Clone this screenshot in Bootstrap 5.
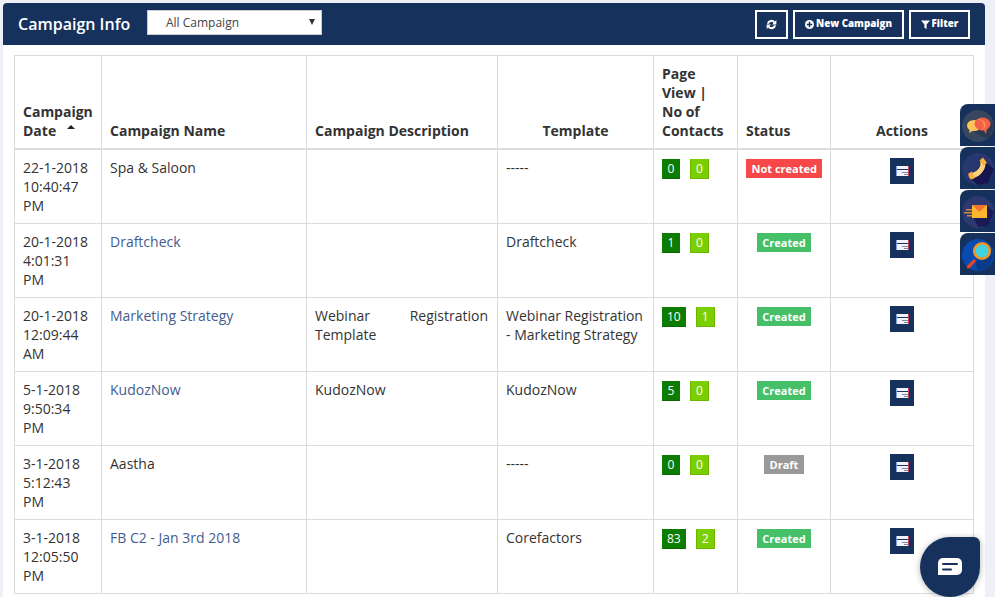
<!DOCTYPE html>
<html lang="en">
<head>
<meta charset="utf-8">
<title>Campaign Info</title>
<link href="https://cdn.jsdelivr.net/npm/bootstrap@5.3.0/dist/css/bootstrap.min.css" rel="stylesheet">
<style>
html,body{height:597px;overflow:hidden}
body{background:#edf0f6;font-family:"Open Sans",sans-serif;font-size:14px;color:#333;line-height:19px}
.shell{margin:3px 10px 0 3px;background:#fff;height:594px;overflow:hidden;border-radius:4px 4px 0 0}
.headbar{background:#16315c;height:42px;padding:0 15px;color:#fff}
.headbar h1{font-size:16px;font-weight:600;margin:0;line-height:46px;width:129px}
.pick{width:175px;height:25px;background:#fff;border:1px solid #ccc;color:#444;font-size:12px;line-height:23px;padding:0 18px;position:relative;margin-top:-4px}
.pick::after{content:"";position:absolute;right:6px;top:8px;border:3px solid transparent;border-top:6px solid #333;border-bottom:0}
.hbtn{height:29px;border:2px solid #fff;border-radius:0;background:transparent;color:#fff;font-size:9.8px;font-weight:800;padding:0;display:flex;align-items:center;justify-content:center;gap:2px}
.hbtn:hover{color:#fff}
.hb1{width:33px}.hb2{width:111px}.hb3{width:61px}
.tablewrap{padding:10px 11px 0 11px}
.tablewrap .table{table-layout:fixed;width:960px;margin:0;border-color:#dcdcdc;color:#333;font-size:14px;line-height:19px;--bs-table-color:#333}
.tablewrap .table>:not(caption)>*>*{padding:8px;border-width:1px;border-color:#dcdcdc;color:#333}
.tablewrap .table thead th{vertical-align:bottom;font-weight:700;border-bottom:2px solid #dcdcdc}
.tablewrap tbody td{height:74px;vertical-align:top}
.tablewrap .table thead tr,.tablewrap tbody tr{border-color:#dcdcdc}
.tablewrap .table a.cname{color:#435d91;text-decoration:none}
.sortup{display:inline-block;border:4px solid transparent;border-bottom:4px solid #222;border-top:0;margin:0 0 7px 7px}
.tablewrap .table>tbody>tr>td.just{text-align:justify;padding-right:9px}
.cnt{display:inline-block;min-width:18px;height:20px;line-height:20px;font-size:12px;text-align:center;color:#fff;padding:0 5px;margin:1px 7px 0 0;vertical-align:top}
.cntd{background:#0c7c02;border-bottom:1px solid #0a6a02}
.cntl{background:#7bcf00;border:1px solid #6cb500;border-top-color:#7bcf00;min-width:19px;margin-left:3px;line-height:18px}
.pill{display:inline-block;color:#fff;font-size:11px;font-weight:700;line-height:19px;height:19px;padding:0 5.500px;margin-top:1px;vertical-align:top;white-space:nowrap}
.pred{background:#f64848}.pgrn{background:#45bf68}.pgry{background:#999}
.act{width:24px;height:26px;margin:0 auto;background:#16315c;display:flex;align-items:center;justify-content:center}
.sidebox{position:absolute;right:0;top:104px;width:35px;display:flex;flex-direction:column;gap:1px}
.sidebox div{height:42px;background:#16315c;border-top-left-radius:8px;display:flex;align-items:center;padding:2px 0 0 2px;overflow:hidden}
.sidebox svg{flex:none}
.chatfab{position:absolute;left:920px;top:537px;width:60px;height:60px;background:#16315c;border-radius:50% 6px 50% 50%;box-shadow:0 1px 6px rgba(0,0,0,.3);display:flex;align-items:center;justify-content:center}
</style>
</head>
<body>
<svg width="0" height="0" class="d-block position-absolute"><defs><symbol id="acticon" viewBox="0 0 13 10"><rect width="13" height="10" fill="#f2f3f8"/><rect width="1" height="10" fill="#7f9fe0"/><rect x="1" y="3" width="11" height="1" fill="#16315c"/><rect x="6" y="6" width="6" height="1" fill="#7b88a3"/><rect x="8" y="8" width="4" height="1" fill="#7b88a3"/><rect x="12" width="1" height="10" fill="#c9405a"/></symbol></defs></svg>
<div class="shell">
  <div class="headbar d-flex align-items-center">
    <h1>Campaign Info</h1>
    <div class="pick">All Campaign</div>
    <div class="ms-auto d-flex" style="gap:5px">
      <button class="btn hbtn hb1" aria-label="Refresh"><svg width="11" height="11" viewBox="0 0 12 12"><path d="M1 5.200A5 5 0 0 1 9.800 2.700L11.300 1.200V6H6.500L8.300 4.300A2.800 2.800 0 0 0 3.300 5.200ZM11 6.800A5 5 0 0 1 2.200 9.300L.7 10.800V6H5.500L3.700 7.700A2.800 2.800 0 0 0 8.700 6.800Z" fill="#fff"/></svg></button>
      <button class="btn hbtn hb2"><svg width="9" height="9" viewBox="0 0 10 10"><circle cx="5" cy="5" r="5" fill="#fff"/><path d="M4.200 2h1.600v2.200H8v1.600H5.800V8H4.200V5.800H2V4.200H4.200Z" fill="#16315c"/></svg>New Campaign</button>
      <button class="btn hbtn hb3"><svg width="9" height="9" viewBox="0 0 10 10"><path d="M0 .5H10L6.200 5V10L3.800 8.500V5Z" fill="#fff"/></svg>Filter</button>
    </div>
  </div>
  <div class="tablewrap">
    <table class="table table-bordered">
      <colgroup><col style="width:87px"><col style="width:205px"><col style="width:191px"><col style="width:156px"><col style="width:84px"><col style="width:93px"><col style="width:143px"></colgroup>
      <thead>
        <tr>
          <th>Campaign Date <span class="sortup"></span></th>
          <th>Campaign Name</th>
          <th>Campaign Description</th>
          <th class="text-center">Template</th>
          <th>Page View | No of Contacts</th>
          <th>Status</th>
          <th class="text-center">Actions</th>
        </tr>
      </thead>
      <tbody>
        <tr>
          <td>22-1-2018 10:40:47 PM</td><td>Spa &amp; Saloon</td><td></td><td>-----</td>
          <td><span class="cnt cntd">0</span><span class="cnt cntl">0</span></td>
          <td class="text-center"><span class="pill pred">Not created</span></td>
          <td><span class="act"><svg width="13" height="10"><use href="#acticon"/></svg></span></td>
        </tr>
        <tr>
          <td>20-1-2018 4:01:31 PM</td><td><a class="cname" href="#">Draftcheck</a></td><td></td><td>Draftcheck</td>
          <td><span class="cnt cntd">1</span><span class="cnt cntl">0</span></td>
          <td class="text-center"><span class="pill pgrn">Created</span></td>
          <td><span class="act"><svg width="13" height="10"><use href="#acticon"/></svg></span></td>
        </tr>
        <tr>
          <td>20-1-2018 12:09:44 AM</td><td><a class="cname" href="#">Marketing Strategy</a></td><td class="just">Webinar Registration Template</td><td>Webinar Registration - Marketing Strategy</td>
          <td><span class="cnt cntd">10</span><span class="cnt cntl">1</span></td>
          <td class="text-center"><span class="pill pgrn">Created</span></td>
          <td><span class="act"><svg width="13" height="10"><use href="#acticon"/></svg></span></td>
        </tr>
        <tr>
          <td>5-1-2018 9:50:34 PM</td><td><a class="cname" href="#">KudozNow</a></td><td>KudozNow</td><td>KudozNow</td>
          <td><span class="cnt cntd">5</span><span class="cnt cntl">0</span></td>
          <td class="text-center"><span class="pill pgrn">Created</span></td>
          <td><span class="act"><svg width="13" height="10"><use href="#acticon"/></svg></span></td>
        </tr>
        <tr>
          <td>3-1-2018 5:12:43 PM</td><td>Aastha</td><td></td><td>-----</td>
          <td><span class="cnt cntd">0</span><span class="cnt cntl">0</span></td>
          <td class="text-center"><span class="pill pgry">Draft</span></td>
          <td><span class="act"><svg width="13" height="10"><use href="#acticon"/></svg></span></td>
        </tr>
        <tr>
          <td>3-1-2018 12:05:50 PM</td><td><a class="cname" href="#">FB C2 - Jan 3rd 2018</a></td><td></td><td>Corefactors</td>
          <td><span class="cnt cntd">83</span><span class="cnt cntl">2</span></td>
          <td class="text-center"><span class="pill pgrn">Created</span></td>
          <td><span class="act"><svg width="13" height="10"><use href="#acticon"/></svg></span></td>
        </tr>
      </tbody>
    </table>
  </div>
</div>
<div class="sidebox">
  <div><svg width="32" height="32" viewBox="0 0 32 32"><circle cx="16" cy="16" r="16" fill="#36475f"/><path d="M12 22 26 30 32 16 27 9Z" fill="#2b3a52"/><ellipse cx="12" cy="15.500" rx="7" ry="5.500" fill="#fcc65a"/><path d="M8 19 7 23 12 20Z" fill="#fcc65a"/><ellipse cx="20.500" cy="14" rx="8" ry="6.500" fill="#f4604a"/><path d="M21 19 24 24 25 18Z" fill="#f4604a"/><path d="M14 9.500A7 6 0 0 1 18.500 20.500 7 5.500 0 0 0 14 9.500Z" fill="#f99245"/></svg></div>
  <div><svg width="32" height="32" viewBox="0 0 32 32"><circle cx="16" cy="16" r="16" fill="#28386f"/><path d="M9 26 21 7 32 16 26 30 16 32Z" fill="#17154f"/><path d="M20.500 8.500C22.500 14 17 21 11 22.500" fill="none" stroke="#fdd27a" stroke-width="5"/><path d="M17.500 7.500 21 4.500 25 10 21.500 12.500Z" fill="#fbb03b"/><path d="M6.500 20.500 10 18.500 13 25 9.500 26.500C7.500 26 6 23 6.500 20.500Z" fill="#fbb03b"/></svg></div>
  <div><svg width="32" height="32" viewBox="0 0 32 32"><circle cx="16" cy="16" r="16" fill="#2d3970"/><path d="M12 22 24 9 32 16 26 30 16 31Z" fill="#1a1a55"/><rect x="10" y="9" width="15" height="13" fill="#fcb62d"/><path d="M10 9H25L17.500 16Z" fill="#f2762e"/><rect x="4" y="13" width="6" height="1.500" fill="#c98f3c"/><rect x="2" y="16" width="8" height="1.500" fill="#c98f3c"/><rect x="5" y="19" width="5" height="1.500" fill="#c98f3c"/></svg></div>
  <div><svg width="32" height="32" viewBox="0 0 32 32"><circle cx="16" cy="16" r="16" fill="#0a4bb0"/><path d="M13 24 28 8 32 16 26 30 16 32Z" fill="#093b8c"/><path d="M5 27 12 20 14 22 8 29C6 30 4 29 5 27Z" fill="#ee4423"/><circle cx="20" cy="12" r="9" fill="#f7931e"/><circle cx="20" cy="12" r="6.500" fill="#3fd3e0"/></svg></div>
</div>
<div class="chatfab"><svg width="24" height="18" viewBox="0 0 24 18"><path d="M5 0H19A5 5 0 0 1 24 5V12A5 5 0 0 1 19 17H0V5A5 5 0 0 1 5 0Z" fill="#fff"/><rect x="4" y="5" width="16" height="2" rx="1" fill="#16315c"/><rect x="4" y="10.500" width="10" height="2" rx="1" fill="#16315c"/></svg></div>
<script src="https://cdn.jsdelivr.net/npm/bootstrap@5.3.0/dist/js/bootstrap.bundle.min.js"></script>
</body>
</html>
